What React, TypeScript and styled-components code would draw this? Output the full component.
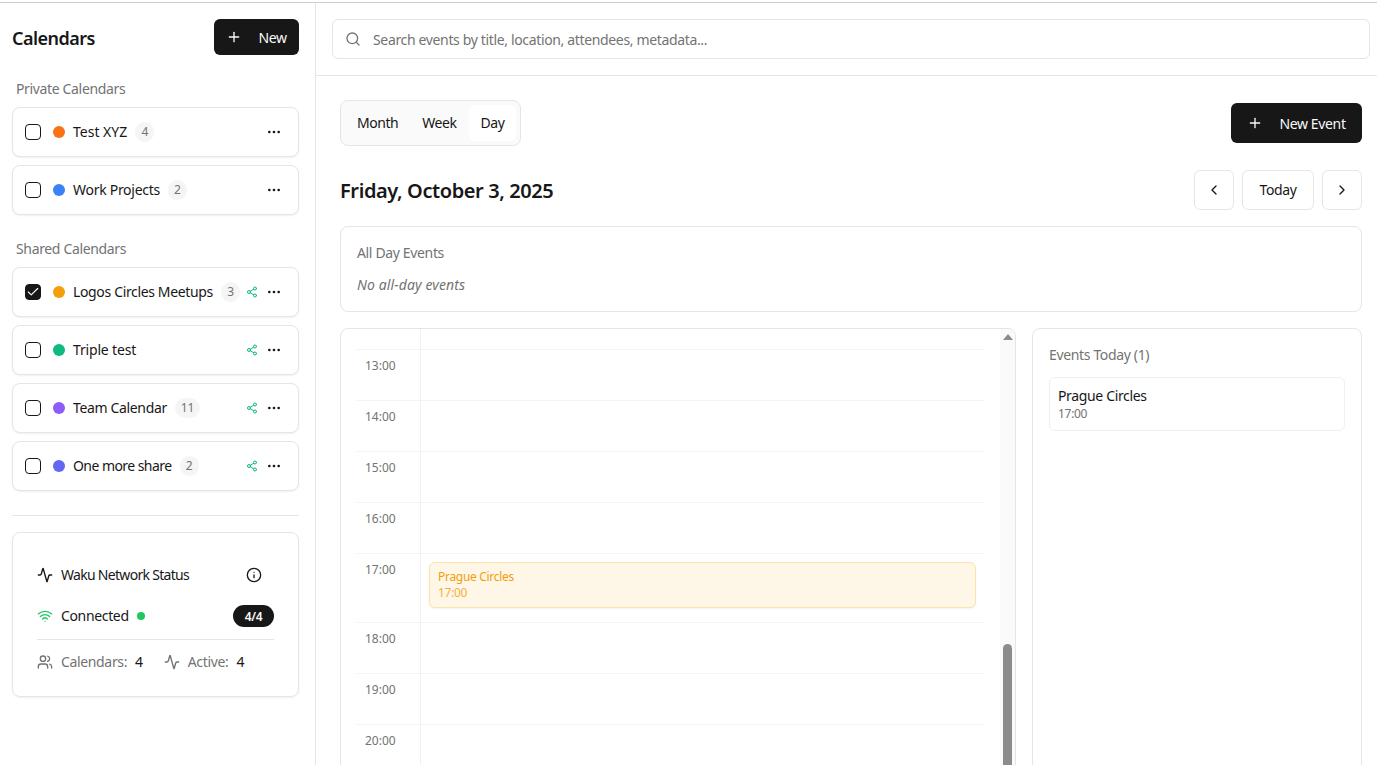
import styled, {createGlobalStyle} from 'styled-components';
import {
  Activity,
  Check,
  ChevronLeft,
  ChevronRight,
  Ellipsis,
  Info,
  Plus,
  Search,
  Share2,
  Users,
  Wifi,
} from 'lucide-react';

interface CalendarItem {
  name: string;
  color: string;
  count?: number;
  checked?: boolean;
  shared?: boolean;
  tracking?: number;
}

const privateCalendars: CalendarItem[] = [
  {name: 'Test XYZ', color: '#f97316', count: 4, tracking: 0},
  {name: 'Work Projects', color: '#3b82f6', count: 2, tracking: -0.02},
];

const sharedCalendars: CalendarItem[] = [
  {name: 'Logos Circles Meetups', color: '#f59e0b', count: 3, checked: true, shared: true},
  {name: 'Triple test', color: '#10b981', shared: true, tracking: -0.012},
  {name: 'Team Calendar', color: '#8b5cf6', count: 11, shared: true},
  {name: 'One more share', color: '#6366f1', count: 2, shared: true, tracking: -0.04},
];

const hours = ['13:00', '14:00', '15:00', '16:00', '17:00', '18:00', '19:00', '20:00'];

const GlobalStyle = createGlobalStyle`
  html, body {
    margin: 0;
    height: 100%;
    overflow: hidden;
    background: #fff;
  }
  * {
    box-sizing: border-box;
    letter-spacing: -0.025em;
  }
  body {
    font-family: "Noto Sans", "Open Sans", sans-serif;
    font-size: 14px;
    color: #171717;
  }
`;

const Page = styled.div`
  height: 100vh;
  padding-top: 2px;
  overflow: hidden;
`;

const Shell = styled.div`
  display: flex;
  height: 100%;
  border-top: 1px solid #cfcfcf;
`;

const Sidebar = styled.aside`
  flex: 0 0 316px;
  border-right: 1px solid #e5e5e5;
  padding: 16px 16px 0 12px;
`;

const SidebarHeader = styled.div`
  display: flex;
  align-items: center;
  justify-content: space-between;
  height: 36px;
`;

const SidebarTitle = styled.h2`
  margin: 0;
  padding-top: 2px;
  font-size: 18px;
  line-height: 28px;
  font-weight: 600;
  letter-spacing: -0.03em;
`;

const DarkButton = styled.button<{$height: number; $width: number; $gap: number}>`
  display: flex;
  align-items: center;
  justify-content: center;
  gap: ${p => p.$gap}px;
  width: ${p => p.$width}px;
  height: ${p => p.$height}px;
  border: 0;
  border-radius: 6px;
  background: #171717;
  color: #fafafa;
  font: inherit;
  font-size: 14px;
`;

const SectionLabel = styled.div<{$top: number}>`
  margin-top: ${p => p.$top}px;
  padding-left: 4px;
  height: 20px;
  line-height: 20px;
  color: #737373;
  margin-bottom: 8px;
`;

const CalendarList = styled.div`
  display: flex;
  flex-direction: column;
  gap: 8px;
`;

const CalendarCard = styled.div`
  display: flex;
  align-items: center;
  height: 50px;
  padding: 0 12px;
  border: 1px solid #e5e5e5;
  border-radius: 8px;
  background: #fff;
  box-shadow: 0 1px 2px rgba(0, 0, 0, 0.06);
`;

const CheckBox = styled.span<{$checked?: boolean}>`
  display: flex;
  align-items: center;
  justify-content: center;
  flex: 0 0 16px;
  width: 16px;
  height: 16px;
  border: 1px solid #171717;
  border-radius: 4px;
  background: ${p => (p.$checked ? '#171717' : '#fff')};
  color: #fafafa;
`;

const Dot = styled.span<{$color: string}>`
  flex: 0 0 12px;
  width: 12px;
  height: 12px;
  margin-left: 12px;
  border-radius: 50%;
  background: ${p => p.$color};
`;

const CalendarName = styled.span<{$tracking?: number}>`
  margin-left: 8px;
  white-space: nowrap;
  line-height: 20px;
  letter-spacing: ${p => p.$tracking ?? -0.025}em;
`;

const CountBadge = styled.span`
  min-width: 19px;
  height: 20px;
  margin-left: 8px;
  padding: 0 6px;
  border-radius: 10px;
  background: #f5f5f5;
  color: #737373;
  font-size: 12px;
  line-height: 20px;
  text-align: center;
`;

const CardActions = styled.div`
  display: flex;
  align-items: center;
  gap: 8px;
  margin-left: auto;
  margin-right: 4px;
`;

const ShareIcon = styled(Share2)`
  color: #10b981;
`;

const Divider = styled.div`
  height: 1px;
  margin-top: 24px;
  background: #e5e5e5;
`;

const StatusCard = styled.div`
  margin-top: 16px;
  padding: 24px;
  height: 165px;
  border: 1px solid #e5e5e5;
  border-radius: 8px;
  box-shadow: 0 1px 2px rgba(0, 0, 0, 0.06);
`;

const StatusRow = styled.div<{$height: number}>`
  display: flex;
  align-items: center;
  gap: 8px;
  height: ${p => p.$height}px;
`;

const StatusText = styled.span<{$tight?: boolean}>`
  margin-top: -1px;
  line-height: 20px;
  letter-spacing: ${p => (p.$tight ? -0.05 : -0.025)}em;
`;

const StatusInfo = styled(Info)`
  margin-left: auto;
  margin-right: 12px;
`;

const OnlineDot = styled.span`
  width: 8px;
  height: 8px;
  border-radius: 50%;
  background: #22c55e;
`;

const PillBadge = styled.span`
  display: flex;
  align-items: center;
  justify-content: center;
  width: 41px;
  height: 22px;
  margin-left: auto;
  border-radius: 11px;
  background: #171717;
  color: #fafafa;
  font-size: 12px;
  font-weight: 600;
`;

const StatsRow = styled.div`
  display: flex;
  align-items: center;
  padding-top: 12px;
  border-top: 1px solid #e5e5e5;
  color: #737373;
`;

const Stat = styled.span`
  display: flex;
  align-items: center;
  gap: 8px;
  margin-right: 21px;
  white-space: nowrap;
  line-height: 20px;
`;

const StatValue = styled.b`
  font-weight: 400;
  color: #171717;
`;

const Main = styled.main`
  flex: 1;
  min-width: 0;
  display: flex;
  flex-direction: column;
`;

const SearchBar = styled.div`
  flex: 0 0 73px;
  padding: 16px 7px 0 16px;
  border-bottom: 1px solid #e5e5e5;
`;

const SearchField = styled.div`
  display: flex;
  align-items: center;
  gap: 12px;
  height: 40px;
  padding: 0 12px;
  border: 1px solid #e5e5e5;
  border-radius: 6px;
  color: #737373;
`;

const Content = styled.div`
  padding: 24px 15px 0 24px;
`;

const ToolRow = styled.div`
  display: flex;
  align-items: center;
  justify-content: space-between;
  height: 46px;
`;

const ViewSwitch = styled.div`
  display: flex;
  height: 46px;
  padding: 4px;
  border: 1px solid #e5e5e5;
  border-radius: 8px;
  background: #fafafa;
`;

const ViewTab = styled.div<{$active?: boolean}>`
  display: flex;
  align-items: center;
  padding: 0 12px 2px;
  border-radius: 6px;
  letter-spacing: -0.032em;
  background: ${p => (p.$active ? '#fff' : 'transparent')};
`;

const DateRow = styled.div`
  display: flex;
  align-items: center;
  justify-content: space-between;
  margin-top: 24px;
  height: 40px;
`;

const DateTitle = styled.h1`
  margin: 0;
  padding-top: 2px;
  font-size: 20px;
  line-height: 28px;
  font-weight: 600;
  letter-spacing: -0.02em;
`;

const DateNav = styled.div`
  display: flex;
  gap: 8px;
`;

const NavButton = styled.div<{$wide?: boolean}>`
  display: flex;
  align-items: center;
  justify-content: center;
  width: ${p => (p.$wide ? 72 : 40)}px;
  height: 40px;
  padding-bottom: ${p => (p.$wide ? 2 : 0)}px;
  border: 1px solid #e5e5e5;
  border-radius: 6px;
`;

const AllDayCard = styled.section`
  margin-top: 16px;
  height: 86px;
  padding: 16px;
  border: 1px solid #e5e5e5;
  border-radius: 8px;
`;

const CardLabel = styled.div`
  line-height: 20px;
  color: #737373;
`;

const EmptyNote = styled.div`
  margin-top: 12px;
  line-height: 20px;
  font-style: italic;
  letter-spacing: 0.008em;
  color: #737373;
`;

const Columns = styled.div`
  display: grid;
  grid-template-columns: 676px 330px;
  gap: 16px;
  margin-top: 16px;
`;

const DayCard = styled.section`
  display: flex;
  height: 500px;
  border: 1px solid #e5e5e5;
  border-radius: 8px;
  overflow: hidden;
`;

const Timeline = styled.div`
  flex: 1;
  padding: 0 16px;
`;

const HourRow = styled.div<{$height: number}>`
  display: flex;
  height: ${p => p.$height}px;
  border-bottom: 1px solid #f3f3f3;
`;

const HourLabel = styled.div`
  flex: 0 0 64px;
  padding: 6px 0 0 8px;
  border-right: 1px solid #f0f0f0;
  font-size: 12px;
  line-height: 20px;
  letter-spacing: 0;
  color: #737373;
`;

const HourSlot = styled.div`
  flex: 1;
  padding: 8px;
`;

const EventChip = styled.div`
  height: 46px;
  padding: 6px 8px;
  border: 1px solid #fde3a7;
  border-radius: 6px;
  background: #fef6e7;
  box-shadow: 0 1px 2px rgba(0, 0, 0, 0.05);
  color: #f59e0b;
  font-size: 12px;
  line-height: 16px;
`;

const EventChipTime = styled.div`
  opacity: 0.8;
`;

const ScrollTrack = styled.div`
  flex: 0 0 15px;
  display: flex;
  flex-direction: column;
  align-items: center;
  background: #fafafa;
`;

const ScrollArrow = styled.span`
  margin-top: 5px;
  width: 0;
  height: 0;
  border-left: 5px solid transparent;
  border-right: 5px solid transparent;
  border-bottom: 6px solid #8c8c8c;
`;

const ScrollThumb = styled.span`
  width: 9px;
  height: 200px;
  margin-top: 304px;
  border-radius: 5px 5px 0 0;
  background: #8c8c8c;
`;

const TodayCard = styled.section`
  height: 500px;
  padding: 16px;
  border: 1px solid #e5e5e5;
  border-radius: 8px;
`;

const TodayItem = styled.div`
  margin-top: 12px;
  height: 54px;
  padding: 8px;
  border: 1px solid #f0f0f0;
  border-radius: 6px;
  line-height: 20px;
`;

const TodayTime = styled.div`
  font-size: 12px;
  line-height: 16px;
  color: #737373;
`;

const CalendarRow = ({item}: {item: CalendarItem}) => (
  <CalendarCard>
    <CheckBox $checked={item.checked}>
      {item.checked && <Check size={14} strokeWidth={2} />}
    </CheckBox>
    <Dot $color={item.color} />
    <CalendarName $tracking={item.tracking}>{item.name}</CalendarName>
    {item.count !== undefined && <CountBadge>{item.count}</CountBadge>}
    <CardActions>
      {item.shared && <ShareIcon size={12} />}
      <Ellipsis size={16} />
    </CardActions>
  </CalendarCard>
);

export default function App() {
  return (
    <Page>
      <GlobalStyle />
      <Shell>
        <Sidebar>
          <SidebarHeader>
            <SidebarTitle>Calendars</SidebarTitle>
            <DarkButton $width={85} $height={36} $gap={16}>
              <Plus size={16} />
              New
            </DarkButton>
          </SidebarHeader>
          <SectionLabel $top={24}>Private Calendars</SectionLabel>
          <CalendarList>
            {privateCalendars.map(item => (
              <CalendarRow key={item.name} item={item} />
            ))}
          </CalendarList>
          <SectionLabel $top={24}>Shared Calendars</SectionLabel>
          <CalendarList>
            {sharedCalendars.map(item => (
              <CalendarRow key={item.name} item={item} />
            ))}
          </CalendarList>
          <Divider />
          <StatusCard>
            <StatusRow $height={36}>
              <Activity size={16} />
              <StatusText $tight>Waku Network Status</StatusText>
              <StatusInfo size={16} />
            </StatusRow>
            <StatusRow $height={46}>
              <Wifi size={16} color="#22c55e" />
              <StatusText>Connected</StatusText>
              <OnlineDot />
              <PillBadge>4/4</PillBadge>
            </StatusRow>
            <StatsRow>
              <Stat>
                <Users size={16} />
                Calendars: <StatValue>4</StatValue>
              </Stat>
              <Stat>
                <Activity size={16} />
                Active: <StatValue>4</StatValue>
              </Stat>
            </StatsRow>
          </StatusCard>
        </Sidebar>
        <Main>
          <SearchBar>
            <SearchField>
              <Search size={16} />
              Search events by title, location, attendees, metadata...
            </SearchField>
          </SearchBar>
          <Content>
            <ToolRow>
              <ViewSwitch>
                <ViewTab>Month</ViewTab>
                <ViewTab>Week</ViewTab>
                <ViewTab $active>Day</ViewTab>
              </ViewSwitch>
              <DarkButton $width={131} $height={40} $gap={16}>
                <Plus size={16} />
                New Event
              </DarkButton>
            </ToolRow>
            <DateRow>
              <DateTitle>Friday, October 3, 2025</DateTitle>
              <DateNav>
                <NavButton>
                  <ChevronLeft size={16} />
                </NavButton>
                <NavButton $wide>Today</NavButton>
                <NavButton>
                  <ChevronRight size={16} />
                </NavButton>
              </DateNav>
            </DateRow>
            <AllDayCard>
              <CardLabel>All Day Events</CardLabel>
              <EmptyNote>No all-day events</EmptyNote>
            </AllDayCard>
            <Columns>
              <DayCard>
                <Timeline>
                  <HourRow $height={21}>
                    <HourLabel />
                  </HourRow>
                  {hours.map(hour => (
                    <HourRow key={hour} $height={hour === '17:00' ? 69 : 51}>
                      <HourLabel>{hour}</HourLabel>
                      <HourSlot>
                        {hour === '17:00' && (
                          <EventChip>
                            Prague Circles
                            <EventChipTime>17:00</EventChipTime>
                          </EventChip>
                        )}
                      </HourSlot>
                    </HourRow>
                  ))}
                </Timeline>
                <ScrollTrack>
                  <ScrollArrow />
                  <ScrollThumb />
                </ScrollTrack>
              </DayCard>
              <TodayCard>
                <CardLabel>Events Today (1)</CardLabel>
                <TodayItem>
                  Prague Circles
                  <TodayTime>17:00</TodayTime>
                </TodayItem>
              </TodayCard>
            </Columns>
          </Content>
        </Main>
      </Shell>
    </Page>
  );
}
